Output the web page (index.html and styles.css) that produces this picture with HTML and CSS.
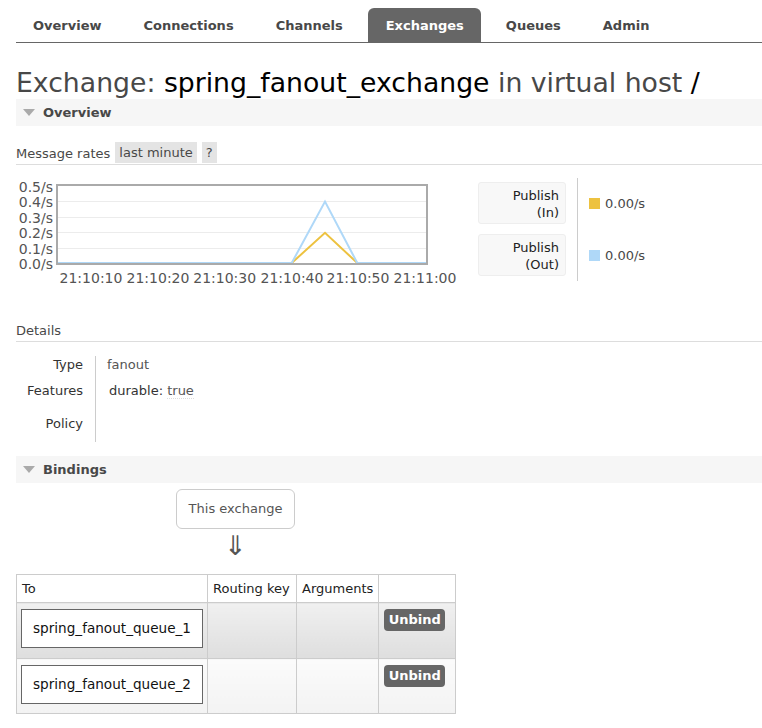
FILE: index.html
```html
<!DOCTYPE html>
<html>
<head>
<meta charset="utf-8">
<link rel="stylesheet" href="styles.css">
</head>
<body>
<div class="page">
  <ul class="tabs">
    <li class="tab">Overview</li>
    <li class="tab">Connections</li>
    <li class="tab">Channels</li>
    <li class="tab active">Exchanges</li>
    <li class="tab">Queues</li>
    <li class="tab">Admin</li>
  </ul>

  <h1 class="title">Exchange: <b class="strong">spring_fanout_exchange</b> in virtual host <b class="strong">/</b></h1>

  <div class="section-head"><span class="tri"></span>Overview</div>

  <div class="rates-bar">
    <span>Message rates</span>
    <span class="pill">last minute</span>
    <span class="pill">?</span>
  </div>

  <div class="chart-row">
    <svg class="chart" width="450" height="104" viewBox="0 0 450 104">
      <g stroke="#ececec" stroke-width="1">
        <line x1="42" y1="24.5" x2="410" y2="24.5"/>
        <line x1="42" y1="40.5" x2="410" y2="40.5"/>
        <line x1="42" y1="55.5" x2="410" y2="55.5"/>
        <line x1="42" y1="71.5" x2="410" y2="71.5"/>
      </g>
      <polyline fill="none" stroke="#edc240" stroke-width="2" points="42,86 275.7,86 309,55.8 341.3,86 410,86"/>
      <polyline fill="none" stroke="#afd8f8" stroke-width="2" points="42,86 275.7,86 309,24.6 341.3,86 410,86"/>
      <rect x="41" y="8" width="370" height="79" fill="none" stroke="#aaaaaa" stroke-width="2"/>
      <g class="ylab" text-anchor="end">
        <text x="37" y="15">0.5/s</text>
        <text x="37" y="30">0.4/s</text>
        <text x="37" y="45.5">0.3/s</text>
        <text x="37" y="61">0.2/s</text>
        <text x="37" y="76.5">0.1/s</text>
        <text x="37" y="92">0.0/s</text>
      </g>
      <g class="xlab" text-anchor="middle">
        <text x="75" y="105.5">21:10:10</text>
        <text x="142" y="105.5">21:10:20</text>
        <text x="208.7" y="105.5">21:10:30</text>
        <text x="276" y="105.5">21:10:40</text>
        <text x="342" y="105.5">21:10:50</text>
        <text x="409" y="105.5">21:11:00</text>
      </g>
    </svg>

    <div class="legend">
      <div class="legend-labels">
        <div class="legend-box">Publish<br>(In)</div>
        <div class="legend-box">Publish<br>(Out)</div>
      </div>
      <div class="legend-values">
        <div class="legend-val"><span class="swatch swatch-in"></span>0.00/s</div>
        <div class="legend-val"><span class="swatch swatch-out"></span>0.00/s</div>
      </div>
    </div>
  </div>

  <h3 class="subhead">Details</h3>

  <div class="details">
    <div class="dlabel r1">Type</div>
    <div class="dval r1">fanout</div>
    <div class="dlabel r2">Features</div>
    <div class="dval r2 feat">durable: <span class="dotted">true</span></div>
    <div class="dlabel r3">Policy</div>
    <div class="dval r3"></div>
  </div>

  <div class="section-head bind-head"><span class="tri"></span>Bindings</div>

  <div class="source">
    <div class="source-box">This exchange</div>
    <div class="arrow">⇓</div>
  </div>

  <table class="bindings">
    <thead>
      <tr>
        <th class="c-to">To</th>
        <th class="c-rk">Routing key</th>
        <th class="c-args">Arguments</th>
        <th class="c-act"></th>
      </tr>
    </thead>
    <tbody>
      <tr class="row-alt1">
        <td><div class="queue-box">spring_fanout_queue_1</div></td>
        <td></td>
        <td></td>
        <td class="act"><span class="btn">Unbind</span></td>
      </tr>
      <tr class="row-alt2">
        <td><div class="queue-box">spring_fanout_queue_2</div></td>
        <td></td>
        <td></td>
        <td class="act"><span class="btn">Unbind</span></td>
      </tr>
    </tbody>
  </table>
</div>
</body>
</html>
```

FILE: styles.css
```css
html, body {
  margin: 0;
  padding: 0;
  background: #fff;
}
body {
  font-family: "DejaVu Sans", Verdana, sans-serif;
  font-size: 13px;
  color: #484848;
}
.page {
  padding-left: 16px;
}
.tabs {
  list-style: none;
  margin: 8px 0 0 0;
  padding: 0;
  display: flex;
  border-bottom: 1px solid #666;
}
.tab {
  height: 33px;
  line-height: 33px;
  padding: 1px 17px 0 17px;
  margin-right: 8px;
  font-weight: bold;
  color: #484848;
}
.tab.active {
  background: #666;
  color: #fff;
  border-radius: 6px 6px 0 0;
  padding-left: 18px;
}
.title {
  margin: 24px 0 0 0;
  font-size: 26.7px;
  line-height: 32px;
  font-weight: normal;
  color: #484848;
  white-space: nowrap;
}
.strong {
  font-weight: normal;
  color: #000;
}
.section-head {
  height: 27px;
  line-height: 27px;
  background: #f6f6f6;
  font-weight: bold;
  padding-left: 6px;
  display: flex;
  align-items: center;
  color: #484848;
}
.tri {
  width: 0;
  height: 0;
  border-left: 6.5px solid transparent;
  border-right: 6.5px solid transparent;
  border-top: 7px solid #aaa;
  margin-right: 8px;
  margin-left: 1px;
}
.rates-bar {
  margin-top: 17px;
  display: flex;
  gap: 5px;
  align-items: center;
  height: 21px;
  border-bottom: 1px solid #ddd;
  line-height: 20px;
}
.rates-bar span:first-child {
  padding-top: 1px;
}
.pill {
  background: #e4e4e4;
  padding: 0 4px;
  align-self: flex-start;
  height: 21px;
  line-height: 21px;
  margin-top: -1px;
}
.chart-row {
  display: flex;
  margin-top: 12px;
  height: 104px;
  overflow: visible;
}
.chart {
  display: block;
  overflow: visible;
}
.ylab text, .xlab text {
  font-family: "DejaVu Sans", Verdana, sans-serif;
  font-size: 14px;
  fill: #545454;
}
.legend {
  display: flex;
  margin-left: 12px;
  margin-top: 1px;
}
.legend-labels {
  display: flex;
  flex-direction: column;
  gap: 10px;
  padding: 4px 11px 4px 0;
}
.legend-box {
  width: 80px;
  height: 34px;
  padding: 4px 6px 2px 0;
  text-align: right;
  line-height: 17px;
  background: #f8f8f8;
  border: 1px solid #eee;
  border-radius: 3px;
  color: #222;
}
.legend-values {
  border-left: 1px solid #ccc;
  padding: 4px 0 4px 11px;
  display: flex;
  flex-direction: column;
  gap: 10px;
}
.legend-val {
  height: 42px;
  display: flex;
  align-items: center;
  color: #484848;
}
.swatch {
  width: 11px;
  height: 11px;
  margin-right: 5px;
  display: inline-block;
}
.swatch-in { background: #edc240; }
.swatch-out { background: #afd8f8; }
.subhead {
  margin: 41px 0 0 0;
  font-size: 13px;
  font-weight: normal;
  line-height: 17px;
  padding-bottom: 2px;
  border-bottom: 1px solid #ddd;
  color: #484848;
}
.details {
  margin-top: 14px;
  display: grid;
  grid-template-columns: 80px auto;
  grid-template-rows: 26px 33px 27px;
  line-height: 17px;
}
.dlabel {
  text-align: right;
  padding-right: 12px;
  border-right: 1px solid #ccc;
  color: #333;
}
.dval {
  padding-left: 11px;
  color: #555;
}
.feat {
  padding-left: 13px;
  color: #333;
}
.dotted {
  color: #555;
  border-bottom: 1px dotted #ddd;
}
.bind-head {
  margin-top: 14px;
}
.source {
  width: 119px;
  margin-left: 160px;
  margin-top: 6px;
  text-align: center;
}
.source-box {
  height: 38px;
  line-height: 38px;
  border: 1px solid #ccc;
  border-radius: 6px;
  color: #555;
}
.arrow {
  font-family: "DejaVu Sans", sans-serif;
  font-size: 27px;
  font-weight: 200;
  line-height: 34px;
  height: 45px;
  color: #555;
}
.bindings {
  border-collapse: collapse;
  font-size: 13px;
}
.bindings th, .bindings td {
  border: 1px solid #ccc;
  padding: 0;
  text-align: left;
  vertical-align: top;
}
.bindings th {
  font-weight: normal;
  height: 27px;
  line-height: 27px;
  padding: 0 5px;
  color: #222;
}
.c-to { width: 180px; }
.c-rk { width: 78px; }
.c-args { width: 71px; }
.c-act { width: 66px; }
.bindings td {
  padding: 6px 4px 0 4px;
}
.row-alt1 td {
  height: 49px;
  background: linear-gradient(#f0f0f0, #dedede);
}
.row-alt2 td {
  height: 48px;
  background: linear-gradient(#fbfbfb, #f3f3f3);
}
.queue-box {
  width: 180px;
  height: 37px;
  line-height: 37px;
  border: 1px solid #666;
  background: #fff;
  text-align: center;
  color: #111;
  font-size: 13.6px;
}
.act {
  padding-left: 5px !important;
}
.btn {
  display: inline-block;
  width: 61px;
  height: 22px;
  line-height: 22px;
  background: #666;
  color: #fff;
  font-weight: bold;
  text-align: center;
  border-radius: 4px;
}
```
